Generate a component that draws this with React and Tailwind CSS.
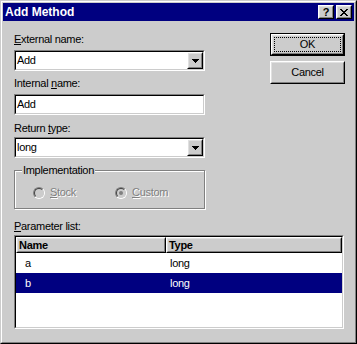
import React from "react";

// Win98 style bevels
function Raised({ className = "", children }) {
    return (
        <div className={`border border-t-white border-l-white border-r-black border-b-black ${className}`}>
            <div className="flex h-full w-full items-center justify-center border border-t-[#e0e0e0] border-l-[#e0e0e0] border-r-[#808080] border-b-[#808080] bg-[#cccccc]">
                {children}
            </div>
        </div>
    );
}

function Field({ className = "", children }) {
    return (
        <div className={`border border-t-[#808080] border-l-[#808080] border-r-white border-b-white ${className}`}>
            <div className="flex h-full w-full items-center border border-t-black border-l-black border-r-[#cccccc] border-b-[#cccccc] bg-white">
                {children}
            </div>
        </div>
    );
}

function Arrow() {
    return (
        <svg width="7" height="4" viewBox="0 0 7 4" shapeRendering="crispEdges">
            <rect x="0" y="0" width="7" height="1" fill="#000" />
            <rect x="1" y="1" width="5" height="1" fill="#000" />
            <rect x="2" y="2" width="3" height="1" fill="#000" />
            <rect x="3" y="3" width="1" height="1" fill="#000" />
        </svg>
    );
}

function CloseGlyph() {
    const rows = ["11000011", "01100110", "00111100", "00011000", "00111100", "01100110", "11000011"];
    return (
        <svg width="8" height="7" viewBox="0 0 8 7" shapeRendering="crispEdges">
            {rows.map((r, y) =>
                r.split("").map((c, x) =>
                    c === "1" ? <rect key={`${x}-${y}`} x={x} y={y} width="1" height="1" fill="#000" /> : null
                )
            )}
        </svg>
    );
}

function Combo({ value }) {
    return (
        <Field className="h-[21px] w-[191px]">
            <span className="flex-1 pl-[1px]">{value}</span>
            <Raised className="h-[17px] w-[16px]">
                <Arrow />
            </Raised>
        </Field>
    );
}

function Radio({ checked }) {
    return (
        <span className="inline-flex h-[12px] w-[12px] rounded-full border border-t-[#808080] border-l-[#808080] border-r-white border-b-white">
            <span className="flex h-full w-full items-center justify-center rounded-full border border-t-[#404040] border-l-[#404040] border-r-[#cccccc] border-b-[#cccccc] bg-[#cccccc]">
                {checked && <span className="h-[4px] w-[4px] rounded-full bg-[#808080]" />}
            </span>
        </span>
    );
}

const disabled = "text-[#808080] [text-shadow:1px_1px_0_#fff]";

const params = [
    { name: "a", type: "long" },
    { name: "b", type: "long", selected: true },
];

export default function App() {
    return (
        <div className="h-[344px] w-[357px] border border-t-[#cccccc] border-l-[#cccccc] border-r-black border-b-black font-['Liberation_Sans',Arial,sans-serif] text-[11px] leading-[13px] tracking-[-0.3px] text-black">
            <div className="h-full w-full border border-t-white border-l-white border-r-[#808080] border-b-[#808080] bg-[#cccccc] p-[1px]">
                {/* title bar */}
                <div className="flex h-[18px] items-center justify-between bg-[#000080] pl-[2px] pr-[2px]">
                    <span className="text-[12px] font-bold tracking-normal text-white">Add Method</span>
                    <div className="flex gap-[2px]">
                        <Raised className="h-[14px] w-[16px]">
                            <span className="text-[11px] font-bold leading-none">?</span>
                        </Raised>
                        <Raised className="h-[14px] w-[16px]">
                            <CloseGlyph />
                        </Raised>
                    </div>
                </div>

                {/* body */}
                <div className="pl-[11px] pr-[9px]">
                    <div className="flex justify-between">
                        <div className="flex w-[191px] flex-col">
                            <label className="mt-[12px] h-[13px]">
                                <u>E</u>xternal name:
                            </label>
                            <div className="mt-[4px]">
                                <Combo value="Add" />
                            </div>
                            <label className="mt-[6px] h-[13px]">
                                Internal <u>n</u>ame:
                            </label>
                            <Field className="mt-[4px] h-[21px] w-[191px]">
                                <span className="pl-[1px]">Add</span>
                            </Field>
                            <label className="mt-[7px] h-[13px]">
                                Return <u>t</u>ype:
                            </label>
                            <div className="mt-[2px]">
                                <Combo value="long" />
                            </div>

                            {/* group box */}
                            <div className="relative mt-[12px] h-[39px] w-[191px] border border-[#808080] shadow-[1px_1px_0_#fff,inset_1px_1px_0_#fff]">
                                <span className="absolute -top-[7px] left-[7px] bg-[#cccccc] px-[1px]">Implementation</span>
                                <div className="flex h-full items-center pl-[18px] pt-[6px]">
                                    <div className="flex w-[82px] items-center gap-[5px]">
                                        <Radio />
                                        <span className={disabled}>
                                            <u>S</u>tock
                                        </span>
                                    </div>
                                    <div className="flex items-center gap-[5px]">
                                        <Radio checked />
                                        <span className={disabled}>
                                            <u>C</u>ustom
                                        </span>
                                    </div>
                                </div>
                            </div>
                        </div>

                        <div className="mt-[12px] flex w-[75px] flex-col gap-[5px]">
                            <div className="h-[23px] border border-black">
                                <Raised className="h-full w-full">
                                    <div className="m-[1px] flex h-[calc(100%-2px)] w-[calc(100%-2px)] items-center justify-center border border-dotted border-black">
                                        OK
                                    </div>
                                </Raised>
                            </div>
                            <Raised className="h-[23px]">Cancel</Raised>
                        </div>
                    </div>

                    <label className="mt-[11px] block h-[13px]">
                        <u>P</u>arameter list:
                    </label>
                    <Field className="mt-[2px] h-[94px] w-[330px]">
                        <div className="flex h-full w-full flex-col self-stretch">
                            <div className="flex h-[16px] font-bold">
                                <Raised className="w-[150px]">
                                    <span className="w-full pl-[1px]">Name</span>
                                </Raised>
                                <Raised className="flex-1">
                                    <span className="w-full pl-[1px]">Type</span>
                                </Raised>
                            </div>
                            {params.map((p) => (
                                <div
                                    key={p.name}
                                    className={`flex h-[20px] items-center ${p.selected ? "bg-[#000080] text-white" : ""}`}
                                >
                                    <span className="w-[150px] pl-[9px]">{p.name}</span>
                                    <span className="pl-[4px]">{p.type}</span>
                                </div>
                            ))}
                        </div>
                    </Field>
                </div>
            </div>
        </div>
    );
}
